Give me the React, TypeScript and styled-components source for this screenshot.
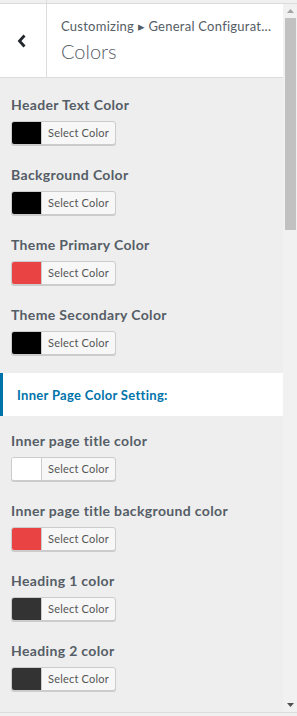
import React from "react";
import styled, { createGlobalStyle } from "styled-components";

type ColorSetting = {
  label: string;
  color: string;
};

const topSettings: ColorSetting[] = [
  { label: "Header Text Color", color: "#000000" },
  { label: "Background Color", color: "#000000" },
  { label: "Theme Primary Color", color: "#e94343" },
  { label: "Theme Secondary Color", color: "#000000" },
];

const innerSettings: ColorSetting[] = [
  { label: "Inner page title color", color: "#ffffff" },
  { label: "Inner page title background color", color: "#e94343" },
  { label: "Heading 1 color", color: "#333333" },
  { label: "Heading 2 color", color: "#333333" },
];

const ColorControl = ({ label, color }: ColorSetting) => (
  <Control>
    <ControlLabel>{label}</ControlLabel>
    <PickerButton type="button">
      <Swatch $color={color} />
      <PickerText>Select Color</PickerText>
    </PickerButton>
  </Control>
);

export const App = () => {
  return (
    <>
      <GlobalStyle />
      <TopStrip>
        <TopStripCell />
      </TopStrip>
      <Frame>
        <Panel>
          <Header>
            <BackButton aria-label="Back">
              <svg width="10" height="14" viewBox="0 0 10 14">
                <polyline
                  points="7.5,1.5 2.5,7 7.5,12.5"
                  fill="none"
                  stroke="#23282d"
                  strokeWidth="2.8"
                />
              </svg>
            </BackButton>
            <HeaderTitles>
              <Breadcrumb>Customizing ▸ General Configurat...</Breadcrumb>
              <SectionTitle>Colors</SectionTitle>
            </HeaderTitles>
          </Header>
          <Controls>
            {topSettings.map((s) => (
              <ColorControl key={s.label} {...s} />
            ))}
            <GroupHeading>Inner Page Color Setting:</GroupHeading>
            {innerSettings.map((s) => (
              <ColorControl key={s.label} {...s} />
            ))}
          </Controls>
        </Panel>
        <Scrollbar>
          <ScrollArrow>
            <svg width="7" height="4" viewBox="0 0 7 4">
              <polygon points="0,4 3.5,0 7,4" fill="#a3a3a3" />
            </svg>
          </ScrollArrow>
          <ScrollTrack>
            <ScrollThumb />
          </ScrollTrack>
          <ScrollArrow>
            <svg width="7" height="4" viewBox="0 0 7 4">
              <polygon points="0,0 7,0 3.5,4" fill="#505050" />
            </svg>
          </ScrollArrow>
        </Scrollbar>
      </Frame>
    </>
  );
};

const GlobalStyle = createGlobalStyle`
  html, body {
    margin: 0;
    padding: 0;
    background: #f0f0f0;
    font-family: Lato, "Open Sans", "Liberation Sans", sans-serif;
  }
  * {
    box-sizing: border-box;
  }
`;

const TopStrip = styled.div`
  height: 3px;
  display: flex;
`;

const TopStripCell = styled.div`
  width: 47px;
  border-right: 1px solid #dcdcdc;
`;

const Frame = styled.div`
  height: 710px;
  display: flex;
  border-top: 1px solid #dcdcdc;
  border-bottom: 1px solid #dcdcdc;
  background: #eeeeee;
`;

const Panel = styled.div`
  flex: 1;
  overflow: hidden;
  display: flex;
  flex-direction: column;
`;

const Header = styled.div`
  height: 74px;
  flex-shrink: 0;
  display: flex;
  background: #fff;
  border-bottom: 1px solid #dcdcdc;
`;

const BackButton = styled.div`
  width: 47px;
  border-right: 1px solid #dcdcdc;
  display: flex;
  align-items: center;
  justify-content: center;
  padding-right: 2px;
`;

const HeaderTitles = styled.div`
  flex: 1;
  padding: 13px 0 0 14px;
  overflow: hidden;
`;

const Breadcrumb = styled.div`
  font-size: 13px;
  line-height: 18px;
  letter-spacing: 0.25px;
  color: #555d66;
  white-space: nowrap;
`;

const SectionTitle = styled.div`
  font-size: 20px;
  font-weight: 300;
  line-height: 28px;
  color: #555d66;
  margin-top: 2px;
`;

const Controls = styled.div`
  padding: 17px 0 0 11px;
  display: flex;
  flex-direction: column;
`;

const Control = styled.div`
  display: flex;
  flex-direction: column;
  align-items: flex-start;
  margin-bottom: 20px;
`;

const ControlLabel = styled.div`
  font-size: 14px;
  font-weight: 700;
  line-height: 20px;
  letter-spacing: 0.35px;
  color: #555d66;
  margin-bottom: 6px;
`;

const PickerButton = styled.button`
  display: flex;
  align-items: stretch;
  height: 24px;
  width: 105px;
  padding: 0;
  border: 1px solid #cccccc;
  border-radius: 3px;
  background: #f7f7f7;
  box-shadow: 0 1px 0 #cccccc;
  overflow: hidden;
  cursor: pointer;
  font-family: inherit;
`;

const Swatch = styled.span<{ $color: string }>`
  width: 30px;
  background: ${(p) => p.$color};
  border-right: 1px solid #cccccc;
`;

const PickerText = styled.span`
  flex: 1;
  font-size: 11px;
  line-height: 22px;
  letter-spacing: 0.2px;
  color: #555;
  text-align: center;
`;

const GroupHeading = styled.div`
  margin: -2px 0 15px -11px;
  height: 43px;
  display: flex;
  align-items: center;
  padding-left: 14px;
  background: #fff;
  border-left: 3px solid #0073aa;
  font-size: 13px;
  font-weight: 700;
  letter-spacing: 0.3px;
  color: #0073aa;
`;

const Scrollbar = styled.div`
  width: 14px;
  display: flex;
  flex-direction: column;
  background: #f1f1f1;
`;

const ScrollArrow = styled.div`
  height: 14px;
  display: flex;
  justify-content: center;
  align-items: center;
`;

const ScrollTrack = styled.div`
  flex: 1;
  padding: 0 1px 0 2px;
`;

const ScrollThumb = styled.div`
  height: 212px;
  background: #c1c1c1;
`;

export default App;
